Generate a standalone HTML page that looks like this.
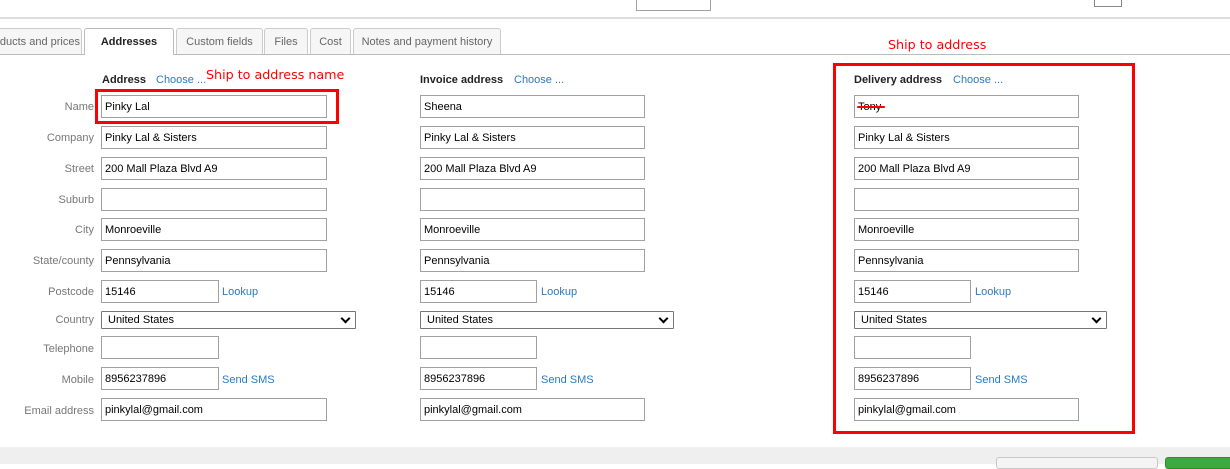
<!DOCTYPE html>
<html><head><style>
body{margin:0;width:1230px;height:464px;overflow:hidden;background:#fff;font-family:"Liberation Sans",Arial,sans-serif;font-size:11px;position:relative}
.a{position:absolute}
.in{position:absolute;border:1px solid #a0a0a0;background:#fff;box-sizing:border-box;height:23px;padding:0 3px;line-height:22px;color:#000;font-size:11px}
.sel{position:absolute;height:18px;border:1px solid #767676;box-sizing:border-box;padding:0 6px;line-height:17px;font-size:11px;border-radius:1px}
.sel:after{content:"";position:absolute;right:6px;top:3px;width:5px;height:5px;border-right:2px solid #000;border-bottom:2px solid #000;transform:rotate(45deg)}
.lb{position:absolute;right:1136px;color:#777;text-align:right;white-space:nowrap}
.lnk{position:absolute;color:#2a7ac0}
.h{position:absolute;font-weight:bold;color:#222}
.tab{position:absolute;top:28px;height:26px;box-sizing:border-box;border:1px solid #ccc;border-bottom:none;border-radius:3px 3px 0 0;background:#f6f6f6;color:#666;line-height:26px;font-size:11px;text-align:center;white-space:nowrap;overflow:hidden}
.red{position:absolute;border:3px solid #f00;box-sizing:border-box}
.rt{position:absolute;color:#f00;font-family:"DejaVu Sans",sans-serif;font-size:12.7px}
</style></head><body>
<div class="a" style="left:0;top:17px;width:1230px;height:2px;background:#ddd"></div>
<div class="a" style="left:636px;top:0;width:73px;height:10px;border:1px solid #a0a0a0;border-top:none"></div>
<div class="a" style="left:1094px;top:0;width:26px;height:6px;border:1px solid #888;border-top:none"></div>
<div class="a" style="left:0;top:54px;width:1230px;height:1px;background:#bbb"></div>
<div class="tab" style="left:-4px;width:86px;text-align:right;padding-right:1px;direction:rtl"><span style="direction:ltr;unicode-bidi:embed">roducts and prices</span></div>
<div class="tab" style="left:84px;width:90px;background:#fff;color:#222;font-weight:bold;height:27px;border-color:#bbb">Addresses</div>
<div class="tab" style="left:176px;width:87px">Custom fields</div>
<div class="tab" style="left:264px;width:44px">Files</div>
<div class="tab" style="left:310px;width:41px">Cost</div>
<div class="tab" style="left:353px;width:148px">Notes and payment history</div>

<div class="h" style="left:102px;top:74px">Address</div><div class="lnk" style="left:156px;top:74px">Choose ...</div>
<div class="h" style="left:420px;top:74px">Invoice address</div><div class="lnk" style="left:514px;top:74px">Choose ...</div>
<div class="h" style="left:854px;top:74px">Delivery address</div><div class="lnk" style="left:953px;top:74px">Choose ...</div>

<div class="lb" style="top:101px">Name</div>
<div class="lb" style="top:132px">Company</div>
<div class="lb" style="top:163px">Street</div>
<div class="lb" style="top:194px">Suburb</div>
<div class="lb" style="top:224px">City</div>
<div class="lb" style="top:255px">State/county</div>
<div class="lb" style="top:286px">Postcode</div>
<div class="lb" style="top:314px">Country</div>
<div class="lb" style="top:343px">Telephone</div>
<div class="lb" style="top:374px">Mobile</div>
<div class="lb" style="top:405px">Email address</div>

<!-- col1 -->
<div class="in" style="left:101px;top:95px;width:226px">Pinky Lal</div>
<div class="in" style="left:101px;top:126px;width:226px">Pinky Lal &amp; Sisters</div>
<div class="in" style="left:101px;top:157px;width:226px">200 Mall Plaza Blvd A9</div>
<div class="in" style="left:101px;top:188px;width:226px"></div>
<div class="in" style="left:101px;top:218px;width:226px">Monroeville</div>
<div class="in" style="left:101px;top:249px;width:226px">Pennsylvania</div>
<div class="in" style="left:101px;top:280px;width:118px">15146</div><div class="lnk" style="left:222px;top:286px">Lookup</div>
<div class="sel" style="left:101px;top:311px;width:255px">United States</div>
<div class="in" style="left:101px;top:336px;width:118px"></div>
<div class="in" style="left:101px;top:367px;width:118px">8956237896</div><div class="lnk" style="left:222px;top:374px">Send SMS</div>
<div class="in" style="left:101px;top:398px;width:226px">pinkylal@gmail.com</div>
<!-- col2 -->
<div class="in" style="left:420px;top:95px;width:225px">Sheena</div>
<div class="in" style="left:420px;top:126px;width:225px">Pinky Lal &amp; Sisters</div>
<div class="in" style="left:420px;top:157px;width:225px">200 Mall Plaza Blvd A9</div>
<div class="in" style="left:420px;top:188px;width:225px"></div>
<div class="in" style="left:420px;top:218px;width:225px">Monroeville</div>
<div class="in" style="left:420px;top:249px;width:225px">Pennsylvania</div>
<div class="in" style="left:420px;top:280px;width:117px">15146</div><div class="lnk" style="left:541px;top:286px">Lookup</div>
<div class="sel" style="left:420px;top:311px;width:254px">United States</div>
<div class="in" style="left:420px;top:336px;width:117px"></div>
<div class="in" style="left:420px;top:367px;width:117px">8956237896</div><div class="lnk" style="left:541px;top:374px">Send SMS</div>
<div class="in" style="left:420px;top:398px;width:225px">pinkylal@gmail.com</div>
<!-- col3 -->
<div class="in" style="left:854px;top:95px;width:225px">Tony</div>
<div class="a" style="left:857px;top:106px;width:28px;height:2px;background:#f00;border-radius:1px"></div>
<div class="in" style="left:854px;top:126px;width:225px">Pinky Lal &amp; Sisters</div>
<div class="in" style="left:854px;top:157px;width:225px">200 Mall Plaza Blvd A9</div>
<div class="in" style="left:854px;top:188px;width:225px"></div>
<div class="in" style="left:854px;top:218px;width:225px">Monroeville</div>
<div class="in" style="left:854px;top:249px;width:225px">Pennsylvania</div>
<div class="in" style="left:854px;top:280px;width:117px">15146</div><div class="lnk" style="left:975px;top:286px">Lookup</div>
<div class="sel" style="left:854px;top:311px;width:253px">United States</div>
<div class="in" style="left:854px;top:336px;width:117px"></div>
<div class="in" style="left:854px;top:367px;width:117px">8956237896</div><div class="lnk" style="left:975px;top:374px">Send SMS</div>
<div class="in" style="left:854px;top:398px;width:225px">pinkylal@gmail.com</div>

<div class="red" style="left:95px;top:89px;width:244px;height:35px"></div>
<div class="red" style="left:833px;top:63px;width:302px;height:371px"></div>
<div class="rt" style="left:206px;top:67px">Ship to address name</div>
<div class="rt" style="left:888px;top:37px">Ship to address</div>

<div class="a" style="left:0;top:447px;width:1230px;height:17px;background:#efefef"></div>
<div class="a" style="left:996px;top:457px;width:160px;height:10px;background:#f4f4f4;border:1px solid #c8c8c8;border-radius:3px"></div>
<div class="a" style="left:1165px;top:457px;width:70px;height:10px;background:#3fa83f;border:1px solid #2e8f2e;border-radius:3px"></div>
</body></html>
